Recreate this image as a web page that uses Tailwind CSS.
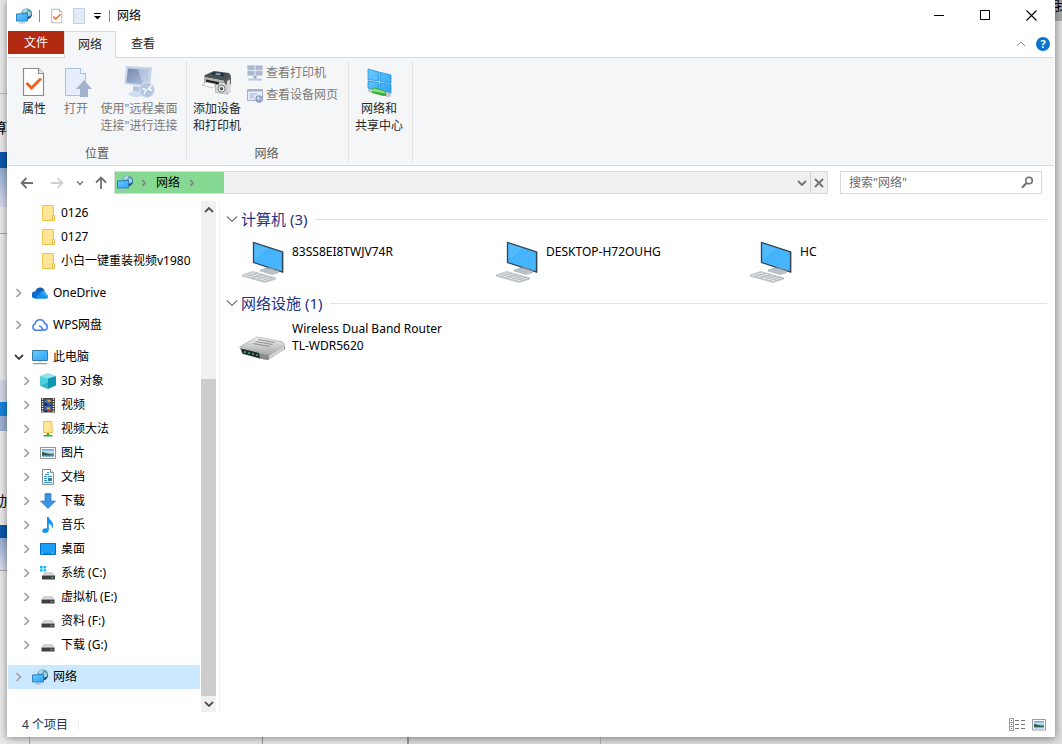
<!DOCTYPE html>
<html lang="zh-CN">

<head>
	<meta charset="UTF-8">
	<meta name="viewport" content="width=device-width, initial-scale=1.0">
	<script src="https://cdn.jsdelivr.net/npm/@tailwindcss/browser@4"></script>
	<title>网络</title>
</head>

<body class="relative min-h-screen bg-[#e9e9e9] font-['Noto_Sans','Noto_Sans_CJK_SC',sans-serif] text-xs text-black">

	<!-- Icons -->
	<svg class="absolute h-0 w-0" aria-hidden="true">
		<defs>
			<linearGradient id="screen" x1="0" y1="0" x2="1" y2="1">
				<stop offset="0" stop-color="#6ccafc" />
				<stop offset="1" stop-color="#2ba4f6" />
			</linearGradient>
			<linearGradient id="monitor" x1="0" y1="0" x2="1" y2="1">
				<stop offset="0" stop-color="#3fb0fb" />
				<stop offset="1" stop-color="#4ab6ff" />
			</linearGradient>
			<linearGradient id="globe" x1="0" y1="0" x2="1" y2="1">
				<stop offset="0" stop-color="#8fc9de" />
				<stop offset="1" stop-color="#1f6391" />
			</linearGradient>
			<linearGradient id="mono" x1="0" y1="0" x2="1" y2="1">
				<stop offset="0" stop-color="#7386ab" />
				<stop offset="1" stop-color="#b5c6e3" />
			</linearGradient>
			<linearGradient id="metal" x1="0" y1="0" x2="0" y2="1">
				<stop offset="0" stop-color="#f2f2f2" />
				<stop offset="1" stop-color="#a5a5a5" />
			</linearGradient>
			<linearGradient id="pic" x1="0" y1="0" x2="0" y2="1">
				<stop offset="0" stop-color="#4f9fe8" />
				<stop offset=".4" stop-color="#d3ebf7" />
				<stop offset=".6" stop-color="#6aa3bf" />
				<stop offset="1" stop-color="#8dbce2" />
			</linearGradient>
		</defs>
		<symbol id="i-network" viewBox="0 0 16 16">
			<circle cx="10.500" cy="5.700" r="5.500" fill="url(#globe)" />
			<path d="M6.500 3 10 .8l1.500 1-1 2-2.500 1.200zM12 3l2.500 1 .5 3-2 1.500-1.500-2z" fill="#c9efe9" opacity=".75" />
			<path d="M12 11.200c2.500-.7 4-2.800 4-5.200-.8 2-2 3-4 3z" fill="#174f78" />
			<path d="M.5 6 11.500 5.500v7.500H.5z" fill="url(#screen)" stroke="#2c81bb" />
			<path d="M4.500 13.500h3v1h-3z" fill="#9bb5c4" />
			<path d="M3 14.500h6v1H3z" fill="#a9bac6" />
		</symbol>
		<symbol id="i-props" viewBox="0 0 24 32">
			<path d="M1.500 2.500h15l5 5v22h-20z" fill="#fff" stroke="#8b8b8b" stroke-width="1.200" />
			<path d="M16.500 2.500v5h5" fill="#eee" stroke="#8b8b8b" stroke-width="1.200" />
			<path d="m4.500 17 5 5L19 12.500" fill="none" stroke="#f0601a" stroke-width="2.800" />
		</symbol>
		<symbol id="i-open" viewBox="0 0 32 32">
			<path d="M5.500 2.500h15l5 5v22h-20z" fill="#e6eefb" stroke="#b0bfdb" />
			<path d="M20.500 2.500v5h5" fill="#f6f9ff" stroke="#b0bfdb" />
			<path d="m24 14 8 9h-4v8h-8v-8h-4z" fill="#a3b3cf" />
		</symbol>
		<symbol id="i-remote" viewBox="0 0 32 32">
			<path d="M3 0 29 1.500 27 21 1.500 18z" fill="#c5d3ea" />
			<path d="M5 2.500 25.500 4 24 19 3.500 16.500z" fill="url(#mono)" />
			<path d="M15 3.200 25.500 4 24 19l-4-.5z" fill="#d5e0f4" opacity=".5" />
			<path d="m10 20 8 1v5h-8z" fill="#b4c3de" />
			<ellipse cx="13" cy="28" rx="7.500" ry="3" fill="#cfdbee" />
			<circle cx="24" cy="24" r="7.500" fill="#b6c6e0" stroke="#dbe5f5" />
			<path d="m19.500 22.500 3.500 1.500-2 4M28.500 19.500l-3 3.500 3.500 1.500" fill="none" stroke="#fff" stroke-width="1.500" />
		</symbol>
		<symbol id="i-printer" viewBox="0 0 32 32">
			<path d="m4 9 9-4 15 2 2 3-6 5-21-4z" fill="#4b5053" />
			<path d="m13 6 11 1.500-2 3-12-2z" fill="#23343e" />
			<path d="m15 7 5 .7-1 1.500-5-.8z" fill="#7fb4d0" />
			<path d="m3 11 20 4v7L3 18z" fill="#aeb2b4" />
			<path d="m30 10-7 5v7l7-4z" fill="#54595c" />
			<path d="m5 13.500 13 2.700V20L5 17z" fill="#1d1f20" />
			<path d="m1 19 4-3 10 2-3 4z" fill="#fafafa" stroke="#999" stroke-width=".5" />
			<path d="M14.500 18.500h3l1-2h5l1 2h2v9.500l-12-1.500z" fill="#d6d8d9" stroke="#8e9192" stroke-width=".5" />
			<circle cx="20.500" cy="22.700" r="3.600" fill="#f2f2f2" stroke="#6f7578" />
			<circle cx="20.500" cy="22.700" r="1.700" fill="#4c5357" />
			<path d="m26 15 3-1.500V26l-3 2z" fill="#e4e6e6" stroke="#8e9192" stroke-width=".5" />
		</symbol>
		<symbol id="i-share" viewBox="0 0 32 32">
			<path d="m5 3 11 3v9L5 13.500zM17 6.200 28 9v8.500l-11-2zM5 14.800l11 1.700V25L5 22.500zM17 16.700l11 2V27.500L17 25z" fill="url(#screen)" stroke="#148ada" stroke-width=".7" />
			<path d="m5 22.500 4 1V27l-4-1.500zM23 26l5 1v3l-3 1.500-2-1z" fill="#c3c7c9" />
			<path d="m9 22.500 3-1 11 3.500v5L20 30 9 27z" fill="#3fae45" />
			<path d="m9 23.500 3-.7 10 3v1.500L9 25z" fill="#93e291" />
		</symbol>
		<symbol id="i-viewprinters" viewBox="0 0 16 16">
			<path d="M.5.5h7v4.500h-7zM8.500.5h7v4.500h-7zM.5 6h7v4.500h-7zM8.500 6h7v4.500h-7z" fill="#a9b8d2" stroke="#c3cfe3" stroke-width=".6" />
			<path d="M6.500 11h3v2.500h-3z" fill="#93a4c4" />
			<path d="M1 13.500h14v2H1z" fill="#b9c7df" />
		</symbol>
		<symbol id="i-viewpage" viewBox="0 0 16 16">
			<path d="M.5 2.500h15v11H.5z" fill="#e8effa" stroke="#a3b3cf" />
			<path d="M.5 2.500h15v2H.5z" fill="#a3b3cf" />
			<path d="M2.500 7h8M2.500 9h5M2.500 11h5" stroke="#a3b3cf" />
			<circle cx="12" cy="12" r="3.700" fill="#8fa1c1" />
			<path d="m10 10.500 2-1 1 2-2 2zM13 12.500l2-1v2z" fill="#d7e1f1" />
		</symbol>
		<symbol id="i-folder" viewBox="0 0 16 16">
			<path d="M2.500.5h11v11l1 .5v3.500h-12z" fill="#ffe594" stroke="#ecc54f" />
			<path d="M12.500 10.500v5h1.800v-5z" fill="#ffefba" stroke="#e3b53b" stroke-width=".8" />
		</symbol>
		<symbol id="i-onedrive" viewBox="0 0 16 16">
			<path d="M3.500 6.500a4.700 4.700 0 0 1 9-1L9 10z" fill="#0f5fb4" />
			<path d="M3 13.500A3.400 3.400 0 0 1 3.500 6.300c2-.6 4.500.4 7.500 3.500l-4 3.700z" fill="#0a6ccf" />
			<path d="M8 9c1-4.500 5.500-4.500 6 0C17 10 16.500 13.500 14 13.500H3z" fill="#27a5ee" />
			<path d="M3 13.500h11.300c1 0 1.500-.7 1.500-1.300L8.500 8.500z" fill="#1e90e0" />
		</symbol>
		<symbol id="i-wps" viewBox="0 0 16 16">
			<path d="M10 13.200H4a3.300 3.300 0 0 1-.9-6.400 4.900 4.900 0 0 1 9.600-.2 3.400 3.400 0 0 1-.2 6.600C9.500 13 10.500 9 7.500 9" fill="none" stroke="#4a7df3" stroke-width="1.600" stroke-linecap="round" />
		</symbol>
		<symbol id="i-pc" viewBox="0 0 16 16">
			<path d="M.5 1.500h15v10H.5z" fill="url(#screen)" stroke="#3b7ca6" />
			<path d="M6 12h4v1.500H6z" fill="#d5dde2" />
			<path d="M1 14h14v1.300H1z" fill="#8b9fae" />
		</symbol>
		<symbol id="i-3d" viewBox="0 0 16 16">
			<path d="m0 3 8-3 8 3-8 3z" fill="#8fe3ec" />
			<path d="m0 3 8 2.500V16L0 12.500z" fill="#4fd0df" />
			<path d="m8 5.500 8-2.500v9.500L8 16z" fill="#0d97b0" />
			<path d="m0 12.500 8-3v6.500z" fill="#35b5c9" />
		</symbol>
		<symbol id="i-video" viewBox="0 0 16 16">
			<path d="M1 1h14v14.500H1z" fill="#3a3a3a" />
			<path d="M2.500 1.500v14M13.500 1.500v14" stroke="#fff" stroke-width="1.500" stroke-dasharray="1.200 1.200" />
			<path d="M4.500 2h7v6h-7zM4.500 9h7v6h-7z" fill="#3a68b4" />
			<path d="M7.500 3h3v2h-3zM7 10.500h3v2H7z" fill="#d8a928" />
			<path d="M8 5.500h3V7H8zM8 13h3v1.500H8z" fill="#a13c34" />
			<path d="M4.500 6h3v2h-3zM4.500 13h3v2h-3z" fill="#1c2b4e" />
		</symbol>
		<symbol id="i-netfolder" viewBox="0 0 16 16">
			<path d="M3.500.5h8.500v8l.8.5v2.500H3.500z" fill="#ffe594" stroke="#ecc54f" />
			<path d="M7 12h2v2h3.500v1.600h-9V14H7z" fill="#27b434" />
		</symbol>
		<symbol id="i-picture" viewBox="0 0 16 16">
			<path d="M.5 2.500h15v11H.5z" fill="#fff" stroke="#939393" />
			<path d="M2 4h12v8H2z" fill="url(#pic)" />
			<path d="M2 7c3 0 5 2.500 12 2.500v1H2z" fill="#315d4e" />
		</symbol>
		<symbol id="i-doc" viewBox="0 0 16 16">
			<path d="M2.500.5h8l3 3v12h-11z" fill="#fff" stroke="#8c8c8c" />
			<path d="M10.500.5v3h3" fill="#eee" stroke="#8c8c8c" />
			<path d="M7 3.500h2M5 5.500h4M4 7.500h3M8 7.500h4M4 9.500h3M4 11.500h3M4 13.500h8" stroke="#2f8fd4" />
			<path d="M8 9h4v3H8z" fill="#427d8f" />
		</symbol>
		<symbol id="i-download" viewBox="0 0 16 16">
			<path d="M5 .5h6V8h4.500L8 15.600.5 8H5z" fill="#3b93e4" stroke="#2c79c4" stroke-width=".7" />
		</symbol>
		<symbol id="i-music" viewBox="0 0 16 16">
			<path d="M7 0h1.700c.3 3 5 4 4.300 9.500-.2 1-.6 1.500-1.200 2 .4-3-.8-4.300-3-5V13c0 2-1.800 3-3.800 3S2 15 2.300 13.500c.4-1.700 2.700-2.700 4.700-2z" fill="#0f93f2" />
		</symbol>
		<symbol id="i-desktop" viewBox="0 0 16 16">
			<path d="M.5 2.500h15v11H.5z" fill="#1ba0fa" stroke="#0871bd" />
			<path d="M1 12h14v1H1z" fill="#0d7fd0" />
			<path d="M2 12h1v1H2zM12 12h1v1h-1z" fill="#fff" />
		</symbol>
		<symbol id="i-drive" viewBox="0 0 16 16">
			<path d="M3.500 7h9l2 3.500h-13z" fill="#d3d3d5" />
			<path d="M1.500 10.500h13v4h-13z" fill="#3d3f41" />
			<path d="M11 12h1.500v1.200H11z" fill="#5be36a" />
		</symbol>
		<symbol id="i-sysdrive" viewBox="0 0 16 16">
			<path d="M4 7h8.500l2 3.500h-12z" fill="#d3d3d5" />
			<path d="M2 10.500h13v4H2z" fill="#3d3f41" />
			<path d="M11.500 12H13v1.200h-1.500z" fill="#5be36a" />
			<path d="M0 1h2.700v2.400H0zM3.500 1h2.700v2.400H3.500zM0 4.200h2.700v2.400H0zM3.500 4.200h2.700v2.400H3.500z" fill="#18b9f0" />
		</symbol>
		<symbol id="i-computer" viewBox="0 0 48 48">
			<path d="m16 4 30 9.500v21L17 25z" fill="#c9ced1" />
			<path d="m15.500 4.500 29 9.500v20l-29-9.500z" fill="url(#monitor)" stroke="#33434f" stroke-width="1.300" />
			<path d="m16.500 5.800 14 4.600L16.500 22z" fill="#74cbff" opacity=".35" />
			<path d="m27 30 6-1 4 2v3l-8-1z" fill="#7b8a94" />
			<path d="m22 32 7-2 12 3-1 2-6 1.500-12-3.500z" fill="#b9c2c8" stroke="#98a3aa" stroke-width=".5" />
			<path d="m4 37 11-3.500L38 40v1.500L27 45 4 38.500z" fill="#c6cacd" />
			<path d="m4 37 11-3.500L38 40l-11 3.500z" fill="#eef0f1" stroke="#a9b0b4" stroke-width=".5" />
			<path d="m7 36 24 6.500M10 35l24 6.500M13 34l24 6.500M9 38.500 20 35M14 40l11-3.500M19 41.500 30 38M24 42.500 35 39" stroke="#a9b0b4" stroke-width=".7" />
		</symbol>
		<symbol id="i-router" viewBox="0 0 48 48">
			<path d="m2 28 2 6 22 5.500 4 .5 17-11v-3L30 35z" fill="#8b8b8b" />
			<path d="M1.500 27 19 17l24 4.500c3 1 4.500 3 2.500 4.500L31 35.500z" fill="url(#metal)" stroke="#9b9b9b" stroke-width=".6" />
			<path d="M31 35.500 46 26v4L31 39.500z" fill="#d0d0d0" />
			<path d="m3 28.500 18 4.500 1 5.500-17-5z" fill="#202a2c" />
			<path d="M7 31v2M11 32v2M15 33v2M19 34v2" stroke="#3bb266" stroke-width="1.500" />
			<path d="m20 19.500 17 3M17.500 21.500l17 3M15 23.500l17 3" stroke="#8f8f8f" />
		</symbol>
		<symbol id="i-right" viewBox="0 0 8 10">
			<path d="m1.500 1 4 4-4 4" fill="none" stroke="currentColor" stroke-width="1.700" />
		</symbol>
		<symbol id="i-down" viewBox="0 0 10 8">
			<path d="m1 2 4 4 4-4" fill="none" stroke="currentColor" stroke-width="1.800" />
		</symbol>
		<symbol id="i-arrow" viewBox="0 0 14 14">
			<path d="M13 7H2M6.500 2 1.500 7l5 5" fill="none" stroke="currentColor" stroke-width="1.800" />
		</symbol>
		<symbol id="i-thin" viewBox="0 0 12 8">
			<path d="m1 1.500 5 5 5-5" fill="none" stroke="currentColor" stroke-width="1.200" />
		</symbol>
	</svg>

	<!-- Pages behind the window -->
	<div class="absolute inset-0 overflow-hidden" aria-hidden="true">
		<div class="absolute right-0 bottom-0 left-[407px] h-3 border-l-2 border-[#999] bg-[#dcdcdc]"></div>
		<div class="absolute bottom-0 left-[29px] h-3 w-px bg-[#aaa]"></div>
		<div class="absolute bottom-0 left-[262px] h-3 w-px bg-[#999]"></div>
		<div class="absolute bottom-0 left-[600px] h-3 w-px bg-[#b5b5b5]"></div>
		<div class="absolute top-0 right-0 bottom-0 w-2 bg-[#dedede]"></div>
		<div class="absolute top-0 right-0 h-[21px] w-2 overflow-hidden bg-[#a8a8a8]">
			<span class="absolute top-[-5px] left-0 text-sm">我</span>
		</div>
		<div class="absolute top-[93px] left-0 h-px w-2 bg-[#bbb]"></div>
		<div class="absolute top-[118px] left-[-7px] text-sm">算</div>
		<div class="absolute top-[152px] left-0 h-4 w-2 bg-[#0a56ac]"></div>
		<div class="absolute top-[168px] left-0 h-[39px] w-2 bg-linear-to-b from-[#93acd0] to-[#d9dcee]"></div>
		<div class="absolute top-[233px] left-0 h-px w-2 bg-[#aaa]"></div>
		<div class="absolute top-[380px] left-0 h-[22px] w-2 bg-[#d3d8e6]"></div>
		<div class="absolute top-[402px] left-0 h-[14px] w-2 bg-[#1585db]"></div>
		<div class="absolute top-[416px] left-0 h-[15px] w-2 bg-[#9cb0d2]"></div>
		<div class="absolute top-[491px] left-[-7px] text-sm">动</div>
		<div class="absolute top-[525px] left-0 h-[13px] w-2 bg-[#0a56ac]"></div>
		<div class="absolute top-[538px] left-0 h-8 w-2 bg-linear-to-b from-[#93acd0] to-[#d9dcee]"></div>
		<div class="absolute top-[570px] left-0 h-px w-2 bg-[#aaa]"></div>
	</div>

	<div class="relative flex min-h-screen flex-col px-[7px] pb-[7px]">
		<div class="flex grow flex-col bg-white px-px shadow-[0_1px_8px_rgba(0,0,0,0.45)]">

			<!-- Title bar -->
			<header class="flex h-[31px] items-center pl-2">
				<svg class="size-4"><use href="#i-network" /></svg>
				<span class="ml-[7px] h-3 w-px bg-[#888]"></span>
				<button class="ml-[11px]" aria-label="属性"><svg class="h-4 w-3"><use href="#i-props" /></svg></button>
				<button class="ml-[10px] h-4 w-3 border border-[#c5d2e8] bg-[#e3ebf8]" aria-label="新建文件夹"></button>
				<button class="ml-[9px]" aria-label="自定义快速访问工具栏">
					<svg class="h-2 w-[7px]" viewBox="0 0 7 8"><path d="M0 1.500h7" stroke="#000" /><path d="M0 4h7L3.500 7.500z" /></svg>
				</button>
				<span class="ml-2 h-3 w-px bg-[#888]"></span>
				<h1 class="ml-[7px]">网络</h1>
				<div class="ml-auto flex">
					<button class="flex h-[30px] w-[46px] items-center justify-center" aria-label="最小化">
						<svg class="size-[11px]" viewBox="0 0 11 11"><path d="M0 5.500h10" stroke="#000" /></svg>
					</button>
					<button class="flex h-[30px] w-[46px] items-center justify-center" aria-label="最大化">
						<svg class="size-[11px]" viewBox="0 0 11 11"><path d="M.5.500h9v9h-9z" fill="none" stroke="#000" /></svg>
					</button>
					<button class="flex h-[30px] w-[46px] items-center justify-center" aria-label="关闭">
						<svg class="size-[11px]" viewBox="0 0 11 11"><path d="m.5.500 10 10M10.500.500l-10 10" stroke="#000" stroke-width="1.100" /></svg>
					</button>
				</div>
			</header>

			<!-- Ribbon tabs -->
			<nav class="flex h-[27px] items-stretch border-b border-[#dadbdc]">
				<button class="mb-[3px] w-14 bg-[#b22a12] text-white">文件</button>
				<button class="-mb-px w-[52px] border border-b-0 border-[#dadbdc] bg-[#f5f6f7] text-[#262626]">网络</button>
				<button class="w-[54px] text-[#262626]">查看</button>
				<div class="ml-auto flex items-center gap-[10px] pr-1">
					<button aria-label="最小化功能区"><svg class="h-2 w-[10px] rotate-180 text-[#888]"><use href="#i-thin" /></svg></button>
					<button class="size-[14px] rounded-full bg-[#0a74d0] text-center text-[11px] leading-[14px] font-bold text-white" aria-label="帮助">?</button>
				</div>
			</nav>

			<!-- Ribbon -->
			<div class="flex h-[108px] border-b border-[#dadbdc] bg-[#f5f6f7] py-[3px] leading-[17px] text-[#262626]">
				<section class="flex w-[179px] flex-col border-r border-[#e2e3e4] pt-[5px]">
					<div class="flex grow items-start text-[#7a7a7a]">
						<button class="flex w-[52px] flex-col items-center gap-0.5 text-[#262626]">
							<svg class="h-8 w-6"><use href="#i-props" /></svg>属性
						</button>
						<button class="flex w-8 flex-col items-center gap-0.5" disabled>
							<svg class="size-8"><use href="#i-open" /></svg>打开
						</button>
						<button class="flex w-[94px] flex-col items-center gap-0.5" disabled>
							<svg class="size-8"><use href="#i-remote" /></svg>
							<span>使用"远程桌面<br>连接"进行连接</span>
						</button>
					</div>
					<h2 class="text-center text-[#5a5a5a]">位置</h2>
				</section>
				<section class="flex w-[162px] flex-col border-r border-[#e2e3e4] pt-[5px]">
					<div class="flex grow items-start">
						<button class="flex w-[60px] flex-col items-center gap-0.5">
							<svg class="size-8"><use href="#i-printer" /></svg>
							<span>添加设备<br>和打印机</span>
						</button>
						<div class="-mt-0.5 flex flex-col items-start gap-[5px] text-[#7a7a7a]">
							<button class="flex items-center gap-[3px]" disabled><svg class="size-4"><use href="#i-viewprinters" /></svg>查看打印机</button>
							<button class="flex items-center gap-[3px]" disabled><svg class="size-4"><use href="#i-viewpage" /></svg>查看设备网页</button>
						</div>
					</div>
					<h2 class="pr-0.5 text-center text-[#5a5a5a]">网络</h2>
				</section>
				<section class="w-16 border-r border-[#e2e3e4] pt-[5px] pr-[3px]">
					<button class="flex w-full flex-col items-center gap-0.5">
						<svg class="size-8"><use href="#i-share" /></svg>
						<span>网络和<br>共享中心</span>
					</button>
				</section>
			</div>

			<!-- Address bar -->
			<div class="flex h-[35px] items-start pt-[5px] pr-3 pl-3 text-[#707070]">
				<div class="flex h-[23px] w-[94px] items-center">
					<button aria-label="返回"><svg class="size-[14px]"><use href="#i-arrow" /></svg></button>
					<button class="ml-4 text-[#d0d0d0]" aria-label="前进"><svg class="size-[14px] rotate-180"><use href="#i-arrow" /></svg></button>
					<button class="ml-3" aria-label="最近浏览的位置"><svg class="h-[6px] w-2"><use href="#i-down" /></svg></button>
					<button class="ml-2.5" aria-label="上移"><svg class="size-[14px] rotate-90"><use href="#i-arrow" /></svg></button>
				</div>
				<div class="flex h-[23px] grow items-stretch border border-[#d9d9d9] bg-[#f0f0f0]">
					<div class="flex w-[109px] items-center bg-[#86d993] pl-0.5">
						<svg class="size-4"><use href="#i-network" /></svg>
						<svg class="ml-2 h-2 w-[6px] text-[#777]"><use href="#i-right" /></svg>
						<a href="#" class="ml-[9px] text-black">网络</a>
						<svg class="ml-[9px] h-2 w-[6px] text-[#777]"><use href="#i-right" /></svg>
					</div>
					<button class="ml-auto px-[3px]" aria-label="以前的位置"><svg class="h-2 w-[10px]"><use href="#i-down" /></svg></button>
					<button class="border-l border-[#d0d0d0] px-[3px]" aria-label="停止加载">
						<svg class="size-[10px]" viewBox="0 0 10 10"><path d="m1 1 8 8M9 1 1 9" stroke="#777" stroke-width="2" /></svg>
					</button>
				</div>
				<div class="ml-3 flex h-[23px] w-[202px] items-center border border-[#d9d9d9] pr-[7px] pl-2">
					<input type="search" aria-label="搜索网络" placeholder='搜索"网络"' class="w-full min-w-0 grow bg-transparent outline-none placeholder:text-[#6d6d6d]">
					<svg class="size-[13px] shrink-0" viewBox="0 0 13 13"><circle cx="8" cy="4.500" r="3.300" fill="none" stroke="#707070" stroke-width="1.600" /><path d="M5.500 7 1 11.800" stroke="#707070" stroke-width="2" /></svg>
				</div>
			</div>

			<div class="flex grow">
				<!-- Navigation tree -->
				<nav class="flex w-48 shrink-0 flex-col gap-2 text-[#a0a0a0]">
					<div>
						<a href="#" class="flex h-6 items-center gap-[5px] pl-8"><svg class="size-4"><use href="#i-folder" /></svg><span class="text-black">0126</span></a>
						<a href="#" class="flex h-6 items-center gap-[5px] pl-8"><svg class="size-4"><use href="#i-folder" /></svg><span class="text-black">0127</span></a>
						<a href="#" class="flex h-6 items-center gap-[5px] pl-8"><svg class="size-4"><use href="#i-folder" /></svg><span class="whitespace-nowrap text-black">小白一键重装视频v1980</span></a>
					</div>
					<a href="#" class="flex h-6 items-center gap-[5px] pl-[7px]"><svg class="mr-1 h-[10px] w-2"><use href="#i-right" /></svg><svg class="size-4"><use href="#i-onedrive" /></svg><span class="text-black">OneDrive</span></a>
					<a href="#" class="flex h-6 items-center gap-[5px] pl-[7px]"><svg class="mr-1 h-[10px] w-2"><use href="#i-right" /></svg><svg class="size-4"><use href="#i-wps" /></svg><span class="text-black">WPS网盘</span></a>
					<div>
						<a href="#" class="flex h-6 items-center gap-[5px] pl-[6px]"><svg class="mr-[3px] h-2 w-[10px] text-[#404040]"><use href="#i-down" /></svg><svg class="size-4"><use href="#i-pc" /></svg><span class="text-black">此电脑</span></a>
						<a href="#" class="flex h-6 items-center gap-[5px] pl-[15px]"><svg class="mr-1 h-[10px] w-2"><use href="#i-right" /></svg><svg class="size-4"><use href="#i-3d" /></svg><span class="text-black">3D 对象</span></a>
						<a href="#" class="flex h-6 items-center gap-[5px] pl-[15px]"><svg class="mr-1 h-[10px] w-2"><use href="#i-right" /></svg><svg class="size-4"><use href="#i-video" /></svg><span class="text-black">视频</span></a>
						<a href="#" class="flex h-6 items-center gap-[5px] pl-[15px]"><svg class="mr-1 h-[10px] w-2"><use href="#i-right" /></svg><svg class="size-4"><use href="#i-netfolder" /></svg><span class="text-black">视频大法</span></a>
						<a href="#" class="flex h-6 items-center gap-[5px] pl-[15px]"><svg class="mr-1 h-[10px] w-2"><use href="#i-right" /></svg><svg class="size-4"><use href="#i-picture" /></svg><span class="text-black">图片</span></a>
						<a href="#" class="flex h-6 items-center gap-[5px] pl-[15px]"><svg class="mr-1 h-[10px] w-2"><use href="#i-right" /></svg><svg class="size-4"><use href="#i-doc" /></svg><span class="text-black">文档</span></a>
						<a href="#" class="flex h-6 items-center gap-[5px] pl-[15px]"><svg class="mr-1 h-[10px] w-2"><use href="#i-right" /></svg><svg class="size-4"><use href="#i-download" /></svg><span class="text-black">下载</span></a>
						<a href="#" class="flex h-6 items-center gap-[5px] pl-[15px]"><svg class="mr-1 h-[10px] w-2"><use href="#i-right" /></svg><svg class="size-4"><use href="#i-music" /></svg><span class="text-black">音乐</span></a>
						<a href="#" class="flex h-6 items-center gap-[5px] pl-[15px]"><svg class="mr-1 h-[10px] w-2"><use href="#i-right" /></svg><svg class="size-4"><use href="#i-desktop" /></svg><span class="text-black">桌面</span></a>
						<a href="#" class="flex h-6 items-center gap-[5px] pl-[15px]"><svg class="mr-1 h-[10px] w-2"><use href="#i-right" /></svg><svg class="size-4"><use href="#i-sysdrive" /></svg><span class="text-black">系统 (C:)</span></a>
						<a href="#" class="flex h-6 items-center gap-[5px] pl-[15px]"><svg class="mr-1 h-[10px] w-2"><use href="#i-right" /></svg><svg class="size-4"><use href="#i-drive" /></svg><span class="text-black">虚拟机 (E:)</span></a>
						<a href="#" class="flex h-6 items-center gap-[5px] pl-[15px]"><svg class="mr-1 h-[10px] w-2"><use href="#i-right" /></svg><svg class="size-4"><use href="#i-drive" /></svg><span class="text-black">资料 (F:)</span></a>
						<a href="#" class="flex h-6 items-center gap-[5px] pl-[15px]"><svg class="mr-1 h-[10px] w-2"><use href="#i-right" /></svg><svg class="size-4"><use href="#i-drive" /></svg><span class="text-black">下载 (G:)</span></a>
					</div>
					<a href="#" class="flex h-6 items-center gap-[5px] bg-[#cce8ff] pl-[7px]"><svg class="mr-1 h-[10px] w-2"><use href="#i-right" /></svg><svg class="size-4"><use href="#i-network" /></svg><span class="text-black">网络</span></a>
				</nav>

				<!-- Scroll bar -->
				<div class="ml-px flex w-[15px] shrink-0 flex-col items-center bg-[#f0f0f0] text-[#505050]">
					<button class="flex h-[17px] items-center" aria-label="向上滚动"><svg class="h-2 w-[10px] rotate-180"><use href="#i-down" /></svg></button>
					<div class="grow"></div>
					<div class="h-[62%] w-full bg-[#cdcdcd]"></div>
					<button class="flex h-4 items-center" aria-label="向下滚动"><svg class="h-2 w-[10px]"><use href="#i-down" /></svg></button>
				</div>

				<!-- Folder content -->
				<main class="ml-[3px] grow border-l border-[#f0f0f0] pt-[7px] pr-[7px] pl-[6px] leading-[17px]">
					<section>
						<h2 class="flex h-[22px] items-center text-[15px] text-[#1e3287]">
							<svg class="mr-[3px] h-2 w-3 text-[#777]"><use href="#i-thin" /></svg>计算机 (3)
							<span class="ml-2 h-px grow bg-[#e2e2e2]"></span>
						</h2>
						<ul class="flex flex-wrap pt-2 pb-[6px] pl-3">
							<li class="flex w-[254px] gap-[6px]"><svg class="size-12"><use href="#i-computer" /></svg><span class="pt-[5px]">83SS8EI8TWJV74R</span></li>
							<li class="flex w-[254px] gap-[6px]"><svg class="size-12"><use href="#i-computer" /></svg><span class="pt-[5px]">DESKTOP-H72OUHG</span></li>
							<li class="flex w-[254px] gap-[6px]"><svg class="size-12"><use href="#i-computer" /></svg><span class="pt-[5px]">HC</span></li>
						</ul>
					</section>
					<section>
						<h2 class="flex h-[22px] items-center text-[15px] text-[#1e3287]">
							<svg class="mr-[3px] h-2 w-3 text-[#777]"><use href="#i-thin" /></svg>网络设施 (1)
							<span class="ml-2 h-px grow bg-[#e2e2e2]"></span>
						</h2>
						<ul class="flex flex-wrap pt-[6px] pl-3">
							<li class="flex w-[254px] gap-[6px]"><svg class="size-12"><use href="#i-router" /></svg><span>Wireless Dual Band Router<br>TL-WDR5620</span></li>
						</ul>
					</section>
				</main>
			</div>

			<!-- Status bar -->
			<footer class="flex h-[25px] items-center pr-2 pl-[14px] text-[#1e3250]">
				<span>4 个项目</span>
				<span class="ml-2.5 h-3 w-px bg-[#eee]"></span>
				<button class="ml-auto" aria-label="详细信息">
					<svg class="h-[13px] w-4" viewBox="0 0 16 13"><path d="M.5.500h4v12h-4zM.5 4.500h4M.5 8.500h4" fill="none" stroke="#999" /><path d="M2 2h1v1H2zM2 6h1v1H2zM2 10h1v1H2z" fill="#555" /><path d="M6 2.500h4M12 2.500h4M6 6.500h4M12 6.500h4M6 10.500h4M12 10.500h4" stroke="#777" /></svg>
				</button>
				<button class="ml-[7px]" aria-label="大缩略图">
					<svg class="h-3 w-[14px]" viewBox="0 0 14 12"><path d="M.5.500h13v10.500H.5z" fill="#fff" stroke="#999" /><path d="M2 2h10v7.500H2z" fill="url(#pic)" /><path d="M2 5c3 0 5 2 10 2v1H2z" fill="#315d4e" /></svg>
				</button>
			</footer>
		</div>
	</div>
</body>

</html>
